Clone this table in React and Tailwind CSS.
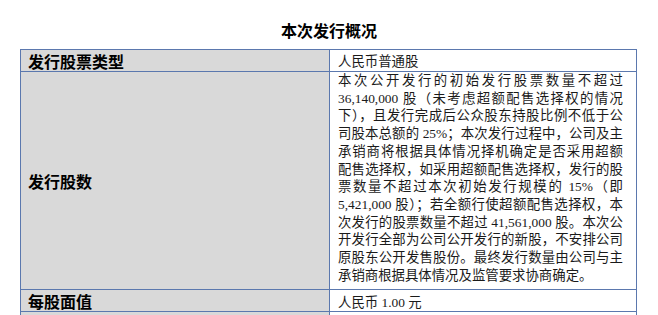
const lines = [
  '本次公开发行的初始发行股票数量不超过',
  '36,140,000 股（未考虑超额配售选择权的情况',
  '下），且发行完成后公众股东持股比例不低于公',
  '司股本总额的 25%；本次发行过程中，公司及主',
  '承销商将根据具体情况择机确定是否采用超额',
  '配售选择权，如采用超额配售选择权，发行的股',
  '票数量不超过本次初始发行规模的 15%（即',
  '5,421,000 股）；若全额行使超额配售选择权，本',
  '次发行的股票数量不超过 41,561,000 股。本次公',
  '开发行全部为公司公开发行的新股，不安排公司',
  '原股东公开发售股份。最终发行数量由公司与主',
  '承销商根据具体情况及监管要求协商确定。',
]

const serif = "font-['Liberation_Serif','Noto_Sans_CJK_SC',serif]"
const bold = "font-['Noto_Sans_CJK_SC',sans-serif] font-bold"

function Label({ children, className = '' }) {
  return (
    <div className={`bg-[#d9d9d9] border-r border-b border-[#5b78ae] pl-[7px] flex items-center text-[16px] leading-[20px] text-black ${bold} ${className}`}>
      {children}
    </div>
  )
}

function Value({ children, className = '' }) {
  return (
    <div className={`border-r border-b border-[#5b78ae] pl-[8px] pr-[13px] text-[13.4px] text-[#1a1a1a] whitespace-nowrap ${serif} ${className}`}>
      {children}
    </div>
  )
}

export default function App() {
  return (
    <div className="w-[658px] h-[315px] overflow-hidden bg-white">
      <div className={`h-[49px] pt-[20px] text-center text-[16px] leading-[20px] text-black ${bold}`}>
        本次发行概况
      </div>

      <div className="ml-[20px] w-[617px] grid grid-cols-[309px_1fr] border-l border-t border-[#5b78ae]">
        <Label className="h-[22px]">发行股票类型</Label>
        <Value className="h-[22px] leading-[21px] pt-[1px]">人民币普通股</Value>

        <Label className="h-[218px]">发行股数</Label>
        <Value className="h-[218px] leading-[17.7px]">
          {lines.map((line, i) => (
            <div
              key={i}
              className={i === lines.length - 1 ? 'text-left' : 'text-justify [text-align-last:justify]'}
            >
              {line}
            </div>
          ))}
        </Value>

        <Label className="h-[22px]">每股面值</Label>
        <Value className="h-[22px] leading-[21px] pt-[2px]">人民币 1.00 元</Value>

        <Label className="h-[60px]">发行价格</Label>
        <Value className="h-[60px] leading-[17.7px] pt-[2px]">本次发行价格将通过向网下投资者询价确定</Value>
      </div>
    </div>
  )
}
